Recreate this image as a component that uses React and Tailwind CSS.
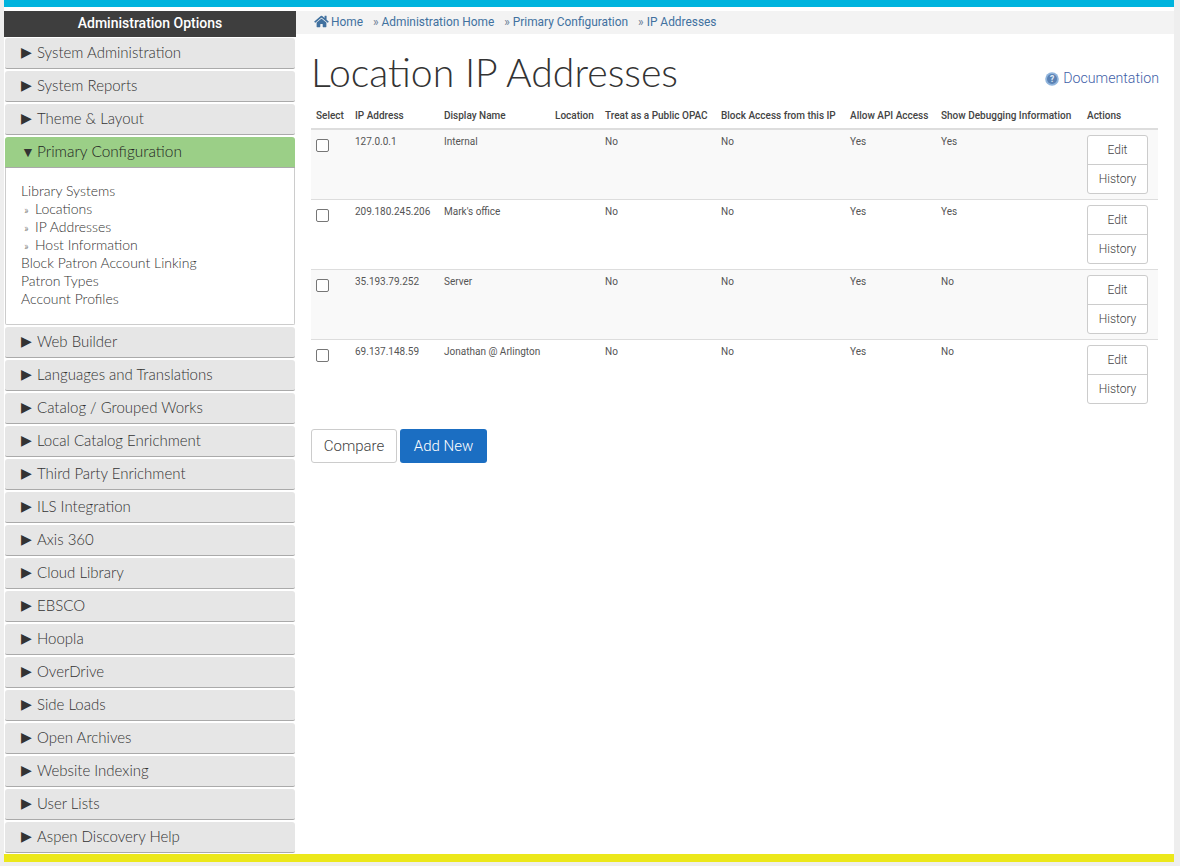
import { FaHome } from 'react-icons/fa';

const before = ['System Administration', 'System Reports', 'Theme & Layout'];
const after = [
  'Web Builder',
  'Languages and Translations',
  'Catalog / Grouped Works',
  'Local Catalog Enrichment',
  'Third Party Enrichment',
  'ILS Integration',
  'Axis 360',
  'Cloud Library',
  'EBSCO',
  'Hoopla',
  'OverDrive',
  'Side Loads',
  'Open Archives',
  'Website Indexing',
  'User Lists',
  'Aspen Discovery Help',
];

const rows = [
  ['127.0.0.1', 'Internal', 'No', 'No', 'Yes', 'Yes'],
  ['209.180.245.206', "Mark's office", 'No', 'No', 'Yes', 'Yes'],
  ['35.193.79.252', 'Server', 'No', 'No', 'Yes', 'No'],
  ['69.137.148.59', 'Jonathan @ Arlington', 'No', 'No', 'Yes', 'No'],
];

function MenuItem({ label }) {
  return (
    <div className="h-[31px] mb-[2px] mx-px pl-[16px] pb-[2px] flex items-center bg-[#e6e6e6] rounded-t-[3px] rounded-b-[2px] border-b border-[#aaaaaa] text-[15px] font-light text-[#333333]">
      <span className="w-[16px] text-[14px] leading-none text-[#333333] font-['DejaVu_Sans',sans-serif]">▶</span>
      <span>{label}</span>
    </div>
  );
}

function SubLink({ children, nested }) {
  return (
    <div className={nested ? 'h-[18px] pl-[3px]' : 'h-[18px]'}>
      {nested && <span className="inline-block w-[11px] text-[12px]">»</span>}
      {children}
    </div>
  );
}

function Sidebar() {
  return (
    <aside className="w-[292px] shrink-0 font-['Lato',sans-serif]">
      <div className="h-[26px] mb-px bg-[#3e3e3e] text-white text-center text-[14px] font-medium leading-[25px] font-['Roboto',sans-serif]">
        Administration Options
      </div>
      {before.map((label) => (
        <MenuItem key={label} label={label} />
      ))}
      <div className="h-[31px] mx-px pl-[16px] pb-[1px] flex items-center bg-[#9bcf87] rounded-t-[3px] border-b border-[#aaaaaa] text-[15.4px] font-light text-[#222222]">
        <span className="w-[16px] text-[14px] leading-none text-[#333333] font-['DejaVu_Sans',sans-serif]">▼</span>
        <span>Primary Configuration</span>
      </div>
      <div className="h-[157px] mb-[2px] mx-px pl-[15px] pt-[14px] bg-white border border-t-0 border-[#cccccc] rounded-b-[2px] text-[14px] font-light text-[#333333] leading-[18px]">
        <SubLink>Library Systems</SubLink>
        <SubLink nested>Locations</SubLink>
        <SubLink nested>IP Addresses</SubLink>
        <SubLink nested>Host Information</SubLink>
        <SubLink>Block Patron Account Linking</SubLink>
        <SubLink>Patron Types</SubLink>
        <SubLink>Account Profiles</SubLink>
      </div>
      {after.map((label) => (
        <MenuItem key={label} label={label} />
      ))}
    </aside>
  );
}

function Breadcrumbs() {
  return (
    <div className="h-[23px] pl-[18px] flex items-center bg-[#f3f3f3] text-[11.9px] text-[#41719f] font-['Roboto',sans-serif]">
      <FaHome className="w-[15px] h-[13px] mr-[2px] mb-[2px]" />
      <span>Home</span>
      <span className="ml-[10px] mr-[3px] text-[#6b7f95]">»</span>
      <span>Administration Home</span>
      <span className="ml-[10px] mr-[3px] text-[#6b7f95]">»</span>
      <span>Primary Configuration</span>
      <span className="ml-[10px] mr-[3px] text-[#6b7f95]">»</span>
      <span>IP Addresses</span>
    </div>
  );
}

function Table() {
  return (
    <table className="w-[847px] table-fixed border-collapse text-[10px] text-[#555555] font-['Roboto',sans-serif]">
      <colgroup>
        <col className="w-[39px]" />
        <col className="w-[89px]" />
        <col className="w-[111px]" />
        <col className="w-[50px]" />
        <col className="w-[116px]" />
        <col className="w-[129px]" />
        <col className="w-[91px]" />
        <col className="w-[146px]" />
        <col className="w-[76px]" />
      </colgroup>
      <thead>
        <tr className="h-[23px] border-b-2 border-[#dddddd] text-left text-[#444444]">
          {['Select', 'IP Address', 'Display Name', 'Location', 'Treat as a Public OPAC', 'Block Access from this IP', 'Allow API Access', 'Show Debugging Information', 'Actions'].map((h) => (
            <th key={h} className="pl-[5px] pt-0 pb-[3px] font-medium whitespace-nowrap">{h}</th>
          ))}
        </tr>
      </thead>
      <tbody>
        {rows.map((r, i) => (
          <tr key={r[0]} className={i % 2 === 0 ? 'h-[70px] border-b border-[#dddddd] bg-[#f9f9f9]' : 'h-[70px] bg-white last:border-b-0 border-b border-[#dddddd]'}>
            <td className="pl-[5px] pt-[9px] align-top">
              <input type="checkbox" className="block w-[13px] h-[13px] appearance-none bg-white border border-[#767676] rounded-[2px]" />
            </td>
            <td className="pl-[5px] pt-[4px] align-top">{r[0]}</td>
            <td className="pl-[5px] pt-[4px] align-top">{r[1]}</td>
            <td className="pl-[5px] pt-[4px] align-top"></td>
            <td className="pl-[5px] pt-[4px] align-top">{r[2]}</td>
            <td className="pl-[5px] pt-[4px] align-top">{r[3]}</td>
            <td className="pl-[5px] pt-[4px] align-top">{r[4]}</td>
            <td className="pl-[5px] pt-[4px] align-top">{r[5]}</td>
            <td className="pl-[5px] pt-[5px] align-top">
              <div className="w-[61px] flex flex-col border border-[#cccccc] rounded-[3px] bg-white text-[12px] font-light text-[#444444] text-center">
                <div className="h-[29px] leading-[28px] border-b border-[#cccccc]">Edit</div>
                <div className="h-[28px] leading-[28px]">History</div>
              </div>
            </td>
          </tr>
        ))}
      </tbody>
    </table>
  );
}

function DocIcon() {
  return (
    <svg width="14" height="14" viewBox="0 0 14 14" className="mr-[4px]">
      <circle cx="7" cy="7" r="6.8" fill="#8fb4dc" />
      <circle cx="7" cy="7" r="5" fill="#5b82b4" />
      <text x="7" y="10" textAnchor="middle" fontSize="8.5" fontWeight="700" fill="#e4edf7" fontFamily="Roboto, sans-serif">?</text>
    </svg>
  );
}

export default function App() {
  return (
    <div className="h-[866px] overflow-hidden bg-[#eeeeee] pl-1 pr-1.5 font-['Roboto',sans-serif]">
      <div className="h-[7px] bg-[#00b4de]" />
      <div className="h-[847px] pt-1 flex bg-white">
        <Sidebar />
        <main className="flex-1">
          <Breadcrumbs />
          <div className="pl-[15px] pr-[15px]">
            <div className="h-[72px] flex items-start justify-between">
              <h1 className="mt-[16px] text-[39.2px] leading-[44px] font-light text-[#333333] font-['Lato',sans-serif]">Location IP Addresses</h1>
              <a className="mt-[34px] flex items-center text-[14.2px] font-light text-[#3f5fa8]">
                <DocIcon />
                Documentation
              </a>
            </div>
            <Table />
            <div className="mt-[20px] flex gap-[3px] text-[15px] font-light">
              <button className="h-[34px] w-[86px] bg-white border border-[#cccccc] rounded-[3px] text-[#444444]">Compare</button>
              <button className="h-[34px] w-[87px] bg-[#1b6ec2] rounded-[3px] text-white">Add New</button>
            </div>
          </div>
        </main>
      </div>
      <div className="h-2 bg-[#ece81a]" />
    </div>
  );
}
